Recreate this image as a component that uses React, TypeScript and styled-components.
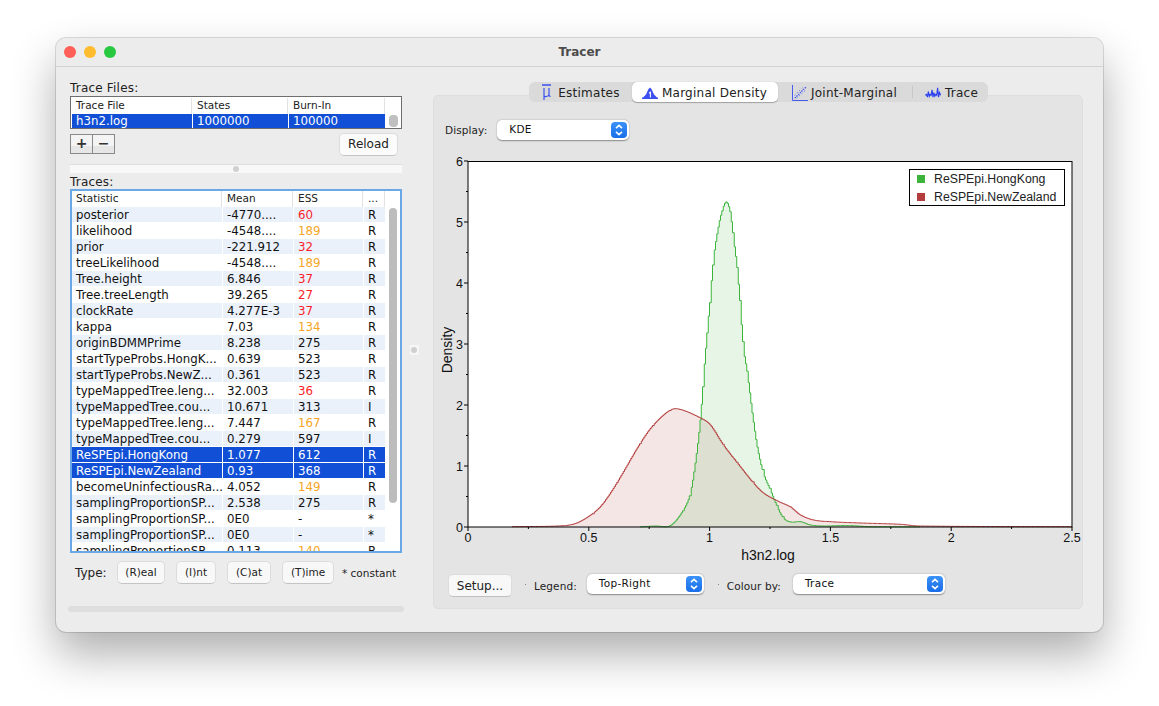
import React from "react";
import styled, { createGlobalStyle } from "styled-components";

type TraceRow = [string, string, string, string];

const TRACES: TraceRow[] = [
  ["posterior", "-4770....", "60", "R"],
  ["likelihood", "-4548....", "189", "R"],
  ["prior", "-221.912", "32", "R"],
  ["treeLikelihood", "-4548....", "189", "R"],
  ["Tree.height", "6.846", "37", "R"],
  ["Tree.treeLength", "39.265", "27", "R"],
  ["clockRate", "4.277E-3", "37", "R"],
  ["kappa", "7.03", "134", "R"],
  ["originBDMMPrime", "8.238", "275", "R"],
  ["startTypeProbs.HongK...", "0.639", "523", "R"],
  ["startTypeProbs.NewZ...", "0.361", "523", "R"],
  ["typeMappedTree.leng...", "32.003", "36", "R"],
  ["typeMappedTree.cou...", "10.671", "313", "I"],
  ["typeMappedTree.leng...", "7.447", "167", "R"],
  ["typeMappedTree.cou...", "0.279", "597", "I"],
  ["ReSPEpi.HongKong", "1.077", "612", "R"],
  ["ReSPEpi.NewZealand", "0.93", "368", "R"],
  ["becomeUninfectiousRa...", "4.052", "149", "R"],
  ["samplingProportionSP...", "2.538", "275", "R"],
  ["samplingProportionSP...", "0E0", "-", "*"],
  ["samplingProportionSP...", "0E0", "-", "*"],
  ["samplingProportionSP...", "0.113", "140", "R"],
];

// curve points are read off the picture, in page pixels
const GREEN_PTS = [
  [640, 526.8], [655, 526], [670, 525.5], [683, 510], [690, 493], [695, 463], [700, 420],
  [703, 380], [707, 330], [710, 297], [713, 260], [718, 227], [722, 210], [726, 202],
  [730, 213], [733, 237], [737, 270], [740, 307], [743, 347], [747, 373], [752, 413],
  [757, 447], [763, 473], [770, 490], [777, 507], [783, 518], [790, 522], [800, 521.7],
  [810, 525], [823, 526], [847, 525.5], [870, 526.7], [920, 527],
];

const RED_PTS = [
  [512, 526.7], [563, 525.7], [577, 522.7], [593, 513], [603, 503], [617, 482], [640, 443],
  [653, 425], [670, 410], [680, 409.5], [700, 418], [710, 425], [723, 445], [737, 463],
  [753, 483], [763, 493], [777, 501], [790, 507], [800, 515], [813, 520], [830, 521.7],
  [860, 523], [900, 524.3], [918, 526], [1072, 526.7],
];

const X_TICKS = [0, 0.25, 0.5, 0.75, 1, 1.25, 1.5, 1.75, 2, 2.25, 2.5];
const Y_TICKS = [0, 0.5, 1, 1.5, 2, 2.5, 3, 3.5, 4, 4.5, 5, 5.5, 6];
const xPos = (v: number) => 468 + v * 241.6;
const yPos = (v: number) => 527 - v * 61;

const stairs = (pts: number[][]) => {
  const slope = (i: number) => {
    const a = pts[Math.max(i - 1, 0)];
    const b = pts[Math.min(i + 1, pts.length - 1)];
    return (b[1] - a[1]) / (b[0] - a[0]);
  };
  let d = `M${pts[0][0]} ${pts[0][1]}`;
  for (let i = 0; i < pts.length - 1; i++) {
    const [x0, y0] = pts[i];
    const [x1, y1] = pts[i + 1];
    const w = x1 - x0;
    for (let x = x0 + 1.25; x <= x1; x += 1.25) {
      const t = (x - x0) / w;
      const h00 = 2 * t * t * t - 3 * t * t + 1;
      const h10 = t * t * t - 2 * t * t + t;
      const h01 = -2 * t * t * t + 3 * t * t;
      const h11 = t * t * t - t * t;
      const y = h00 * y0 + h10 * w * slope(i) + h01 * y1 + h11 * w * slope(i + 1);
      d += `H${x.toFixed(2)}V${Math.min(y, 526.8).toFixed(2)}`;
    }
  }
  return d;
};

const area = (pts: number[][]) => `${stairs(pts)}V527H${pts[0][0]}Z`;

const Stepper: React.FC = () => (
  <StepperBox>
    <svg width="10" height="14" viewBox="0 0 10 14" fill="none" stroke="#fff" strokeWidth="1.6">
      <path d="M2 5.2 5 2.4 8 5.2" />
      <path d="M2 8.8 5 11.6 8 8.8" />
    </svg>
  </StepperBox>
);

const MeanIcon: React.FC = () => (
  <svg width="14" height="17" viewBox="0 0 14 17" fill="none" stroke="#3c50f0" strokeWidth="1.2">
    <path d="M1 1H10" strokeWidth="1.4" />
    <path d="M3 4V16M3 11.5C3 13 7.6 13 8 10.5M8 4V11C8 12 8.6 12.5 9.6 12.2" />
  </svg>
);

const DensityIcon: React.FC = () => (
  <svg width="16" height="12" viewBox="0 0 16 12">
    <path d="M0 10.5H1L4 7.5 6.5 2 8 .5 9.5 2 12 7.5 15 10.5H16V12H0Z" fill="#3c50f0" />
    <path d="M7 6.2 8.4 5.2V10.5" fill="none" stroke="#fff" strokeWidth="1.1" />
  </svg>
);

const JointIcon: React.FC = () => (
  <svg width="16" height="16" viewBox="0 0 17 17" fill="none" stroke="#3c50f0" strokeWidth="1">
    <path d="M.5 0V16.5H17" />
    <path d="M3 14 15 2" strokeDasharray="1.5 1" strokeWidth="1.3" />
    <path d="M5 14 15 5M3 11 12 2" strokeDasharray="1 2.5" />
  </svg>
);

const TraceIcon: React.FC = () => (
  <svg width="16" height="12" viewBox="0 0 17 13" fill="none" stroke="#2a3ff0" strokeWidth="1.2">
    <path d="M0 9 1.5 8 2.5 11 3.5 5 4.5 10 5.5 8 6.5 9 7.5 3 8.5 11 9.5 6 10.5 10 11.5 8 12.5 9 13.5 1 14.5 11 15.5 6 17 9" />
  </svg>
);

const Chart: React.FC = () => (
  <ChartSvg viewBox="434 150 648 415">
    <rect x="468" y="161" width="604" height="366" fill="#fff" />
    <path d={area(RED_PTS)} fill="#b43c3c" fillOpacity="0.13" />
    <path d={area(GREEN_PTS)} fill="#3cb43c" fillOpacity="0.13" />
    <path d={stairs(GREEN_PTS)} fill="none" stroke="#3cb43c" strokeWidth="1" />
    <path d={stairs(RED_PTS)} fill="none" stroke="#b43c3c" strokeWidth="1" />
    <rect x="468" y="161.5" width="604" height="365.5" fill="none" stroke="#000" strokeWidth="1" />
    {Y_TICKS.map((v) => (
      <line
        key={v}
        x1={v % 1 === 0 ? 464 : 466}
        x2="468"
        y1={yPos(v)}
        y2={yPos(v)}
        stroke="#000"
        strokeWidth="1"
      />
    ))}
    {X_TICKS.map((v) => (
      <line
        key={v}
        x1={xPos(v)}
        x2={xPos(v)}
        y1="527"
        y2={v % 0.5 === 0 ? 531 : 529}
        stroke="#000"
        strokeWidth="1"
      />
    ))}
    {[0, 1, 2, 3, 4, 5, 6].map((v) => (
      <AxisText key={v} x="463" y={yPos(v) + 4.5} textAnchor="end">
        {v}
      </AxisText>
    ))}
    {[0, 0.5, 1, 1.5, 2, 2.5].map((v) => (
      <AxisText key={v} x={xPos(v)} y="542" textAnchor="middle">
        {v}
      </AxisText>
    ))}
    <AxisTitle x="768" y="560" textAnchor="middle">
      h3n2.log
    </AxisTitle>
    <AxisTitle x="0" y="0" textAnchor="middle" transform="translate(451.5 350) rotate(-90)">
      Density
    </AxisTitle>
    <rect x="909.5" y="169.5" width="155" height="36" fill="#fff" stroke="#000" strokeWidth="1" />
    <rect x="917" y="175" width="8" height="8" fill="#3cb43c" />
    <rect x="917" y="193" width="8" height="8" fill="#b43c3c" />
    <LegendText x="934" y="183">
      ReSPEpi.HongKong
    </LegendText>
    <LegendText x="934" y="201">
      ReSPEpi.NewZealand
    </LegendText>
  </ChartSvg>
);

const App: React.FC = () => (
  <>
    <GlobalStyle />
    <Window>
      <TitleBar>
        <Lights>
          <Light $color="#ff5f57" />
          <Light $color="#febc2e" />
          <Light $color="#28c840" />
        </Lights>
        <Title>Tracer</Title>
      </TitleBar>
      <Body>
        <LeftColumn>
          <SectionLabel>Trace Files:</SectionLabel>
          <FilesTable>
            <FilesRow>
              <HeadCell>Trace File</HeadCell>
              <HeadCell>States</HeadCell>
              <HeadCell>Burn-In</HeadCell>
            </FilesRow>
            <FilesRow>
              <Cell $selected>h3n2.log</Cell>
              <Cell $selected>1000000</Cell>
              <Cell $selected>100000</Cell>
              <FileThumb />
            </FilesRow>
          </FilesTable>
          <FileButtons>
            <PlusMinus>
              <PlusMinusButton>+</PlusMinusButton>
              <PlusMinusButton>−</PlusMinusButton>
            </PlusMinus>
            <ReloadButton>Reload</ReloadButton>
          </FileButtons>
          <Splitter>
            <Knob />
          </Splitter>
          <SectionLabel>Traces:</SectionLabel>
          <TracesTable>
            <TraceGrid>
              <HeadCell>Statistic</HeadCell>
              <HeadCell>Mean</HeadCell>
              <HeadCell>ESS</HeadCell>
              <HeadCell>...</HeadCell>
            </TraceGrid>
            <TraceBody>
              <TraceRows>
                {TRACES.map((row, i) => {
                  const selected = row[0].startsWith("ReSPEpi");
                  const tinted = i % 2 === 0;
                  const ess = Number(row[2]);
                  const essColor = ess < 100 ? "#fa1e28" : ess < 200 ? "#f5a623" : "#111";
                  return (
                    <TraceGrid key={i}>
                      <Cell $selected={selected} $tinted={tinted}>
                        {row[0]}
                      </Cell>
                      <Cell $selected={selected} $tinted={tinted}>
                        {row[1]}
                      </Cell>
                      <Cell $selected={selected} $tinted={tinted} $color={essColor}>
                        {row[2]}
                      </Cell>
                      <Cell $selected={selected} $tinted={tinted}>
                        {row[3]}
                      </Cell>
                    </TraceGrid>
                  );
                })}
              </TraceRows>
              <TraceScroll>
                <TraceThumb />
              </TraceScroll>
            </TraceBody>
          </TracesTable>
          <TypeRow>
            <TypeLabel>Type:</TypeLabel>
            <TypeButton $width={48}>(R)eal</TypeButton>
            <TypeButton $width={40}>(I)nt</TypeButton>
            <TypeButton $width={44}>(C)at</TypeButton>
            <TypeButton $width={52}>(T)ime</TypeButton>
            <ConstantNote>* constant</ConstantNote>
          </TypeRow>
          <BottomBar />
        </LeftColumn>
        <Gutter>
          <GutterKnob>
            <Knob />
          </GutterKnob>
        </Gutter>
        <Panel>
          <Tabs>
            <Tab $width={102} $gap={3}>
              <MeanIcon />
              Estimates
            </Tab>
            <Tab $width={146} $gap={4} $active>
              <DensityIcon />
              Marginal Density
            </Tab>
            <Tab $width={134} $gap={3}>
              <JointIcon />
              Joint-Marginal
            </Tab>
            <TabDivider />
            <Tab $width={74} $gap={4} $shift={4}>
              <TraceIcon />
              Trace
            </Tab>
          </Tabs>
          <DisplayRow>
            <ControlLabel>Display:</ControlLabel>
            <Select $width={132}>
              KDE
              <Stepper />
            </Select>
          </DisplayRow>
          <Chart />
          <SetupRow>
            <SetupButton>Setup...</SetupButton>
            <Tick />
            <ControlLabel>Legend:</ControlLabel>
            <Select $width={117}>
              Top-Right
              <Stepper />
            </Select>
            <Tick />
            <ControlLabel $gap={12}>Colour by:</ControlLabel>
            <Select $width={152}>
              Trace
              <Stepper />
            </Select>
          </SetupRow>
        </Panel>
      </Body>
    </Window>
  </>
);

const FONT = `"DejaVu Sans", Verdana, sans-serif`;

const GlobalStyle = createGlobalStyle`
  html, body {
    margin: 0;
    height: 706px;
    overflow: hidden;
    background: #fff;
    font-family: ${FONT};
    color: #1c1c1c;
  }
`;

const Window = styled.div`
  box-sizing: border-box;
  width: 1047px;
  height: 594px;
  margin: 38px 0 0 56px;
  background: #ececec;
  border-radius: 10px;
  box-shadow: 0 0 0 1px rgba(0, 0, 0, 0.13), 0 22px 45px rgba(0, 0, 0, 0.32);
  overflow: hidden;
`;

const TitleBar = styled.div`
  position: relative;
  height: 28px;
  display: flex;
  align-items: center;
  justify-content: center;
  background: #ececec;
  border-bottom: 1px solid #d2d2d2;
`;

const Lights = styled.div`
  position: absolute;
  left: 8px;
  top: 8px;
  display: flex;
  gap: 8px;
`;

const Light = styled.span<{ $color: string }>`
  width: 12px;
  height: 12px;
  border-radius: 50%;
  background: ${(p) => p.$color};
`;

const Title = styled.div`
  font-size: 12px;
  font-weight: 700;
  color: #4c4c4c;
`;

const Body = styled.div`
  display: flex;
  height: 565px;
`;

const LeftColumn = styled.div`
  width: 334px;
  margin-left: 12px;
  display: flex;
  flex-direction: column;
  padding-top: 14px;
`;

const SectionLabel = styled.div`
  margin-left: 2px;
  height: 15px;
  line-height: 15px;
  font-size: 12px;
  letter-spacing: 0.2px;
  color: #222;
`;

const FilesTable = styled.div`
  box-sizing: border-box;
  margin-left: 2px;
  width: 332px;
  height: 33px;
  border: 1px solid #6e6e6e;
  background: #fff;
  padding: 1px 0 0 1px;
`;

const HeadCell = styled.div`
  font-size: 10.5px;
  line-height: 15px;
  height: 16px;
  padding-left: 4px;
  color: #222;
  border-right: 1px solid #e2e2e2;
  white-space: nowrap;
  overflow: hidden;
`;

const Cell = styled.div<{ $selected?: boolean; $tinted?: boolean; $color?: string }>`
  font-size: 11.8px;
  line-height: 17px;
  height: 15px;
  padding-left: 4px;
  white-space: nowrap;
  overflow: hidden;
  background: ${(p) => (p.$selected ? "#1150d6" : p.$tinted ? "#ebf1fb" : "transparent")};
  color: ${(p) => (p.$selected ? "#fff" : p.$color || "#111")};
`;

const FilesRow = styled.div`
  position: relative;
  display: grid;
  grid-template-columns: 120px 95px 96px;
  column-gap: 1px;
  ${Cell} {
    height: 14px;
    line-height: 15px;
  }
`;

const FileThumb = styled.span`
  position: absolute;
  left: 317px;
  top: 1px;
  width: 9px;
  height: 12px;
  border-radius: 4px;
  background: #c0c0c0;
`;

const FileButtons = styled.div`
  margin: 4px 4px 0 2px;
  display: flex;
  justify-content: space-between;
  align-items: flex-start;
  height: 31px;
`;

const PlusMinus = styled.div`
  display: flex;
  margin-top: 1px;
  border: 1px solid #8a8a8a;
  background: linear-gradient(#f4f4f4 0, #f4f4f4 60%, #e6e6e6 60%);
`;

const PlusMinusButton = styled.div`
  width: 21px;
  height: 18px;
  line-height: 17px;
  text-align: center;
  font-size: 14px;
  font-weight: 700;
  color: #333;
  & + & {
    border-left: 1px solid #8a8a8a;
  }
`;

const ReloadButton = styled.div`
  box-sizing: border-box;
  width: 59px;
  height: 23px;
  line-height: 21px;
  text-align: center;
  font-size: 12px;
  background: #fbfbfb;
  border-radius: 5px;
  border: 1px solid #dcdcdc;
  border-bottom-color: #c4c4c4;
  color: #222;
`;

const Splitter = styled.div`
  margin: 0 0 2px 2px;
  width: 332px;
  height: 8px;
  background: #f8f8f8;
  border-top: 1px solid #dedede;
  display: flex;
  align-items: center;
  justify-content: center;
`;

const Knob = styled.span`
  width: 6px;
  height: 6px;
  border-radius: 50%;
  background: #d0d0d0;
`;

const TracesTable = styled.div`
  box-sizing: border-box;
  margin: -1px 0 0 2px;
  width: 332px;
  height: 364px;
  border: 2px solid #6aa9e6;
  background: #fff;
  overflow: hidden;
`;

const TraceGrid = styled.div`
  display: grid;
  grid-template-columns: 150px 70px 69px 21px;
  column-gap: 1px;
  height: 15px;
  margin-bottom: 1px;
`;

const TraceBody = styled.div`
  display: flex;
`;

const TraceRows = styled.div`
  width: 313px;
`;

const TraceScroll = styled.div`
  flex: 1;
  padding: 1px 0 0 4px;
`;

const TraceThumb = styled.div`
  width: 8px;
  height: 295px;
  border-radius: 4px;
  background: #bcbcbc;
`;

const TypeRow = styled.div`
  display: flex;
  align-items: center;
  margin: 8px 0 0 7px;
  height: 23px;
`;

const TypeLabel = styled.div`
  width: 42px;
  font-size: 12px;
  color: #222;
`;

const TypeButton = styled.div<{ $width: number }>`
  box-sizing: border-box;
  width: ${(p) => p.$width}px;
  height: 23px;
  line-height: 20px;
  margin-right: 11px;
  text-align: center;
  font-size: 10.5px;
  background: #f8f8f8;
  border-radius: 5px;
  border: 1px solid #dcdcdc;
  border-bottom-color: #c4c4c4;
  color: #222;
`;

const ConstantNote = styled.div`
  margin-left: -3px;
  font-size: 10.5px;
  color: #222;
  white-space: nowrap;
`;

const BottomBar = styled.div`
  width: 336px;
  height: 6px;
  margin-top: 22px;
  border-radius: 3px;
  background: #dedede;
`;

const Gutter = styled.div`
  width: 31px;
  display: flex;
  justify-content: center;
`;

const GutterKnob = styled.div`
  box-sizing: border-box;
  margin: 278px 0 0 -7px;
  width: 9px;
  height: 10px;
  background: #f6f6f6;
  display: flex;
  align-items: center;
  justify-content: center;
`;

const Panel = styled.div`
  box-sizing: border-box;
  width: 650px;
  height: 514px;
  margin-top: 28px;
  background: #e4e4e4;
  border: 1px solid #dedede;
  border-radius: 5px;
  display: flex;
  flex-direction: column;
`;

const Tabs = styled.div`
  align-self: center;
  margin-top: -14px;
  height: 20px;
  display: flex;
  align-items: center;
  padding: 0 1px;
  background: #dadada;
  border-radius: 6px;
`;

const Tab = styled.div<{ $width: number; $gap: number; $shift?: number; $active?: boolean }>`
  box-sizing: border-box;
  width: ${(p) => p.$width}px;
  height: 20px;
  padding: 1px 0 0 ${(p) => p.$shift || 0}px;
  display: flex;
  align-items: center;
  justify-content: center;
  gap: ${(p) => p.$gap}px;
  font-size: 12px;
  letter-spacing: 0.25px;
  color: #222;
  white-space: nowrap;
  border-radius: 5px;
  background: ${(p) => (p.$active ? "#fff" : "transparent")};
  box-shadow: ${(p) => (p.$active ? "0 0.5px 1px rgba(0,0,0,.3)" : "none")};
`;

const TabDivider = styled.span`
  width: 1px;
  height: 12px;
  background: #c8c8c8;
`;

const DisplayRow = styled.div`
  display: flex;
  align-items: center;
  height: 20px;
  margin: 18px 0 0 11px;
`;

const ControlLabel = styled.div<{ $gap?: number }>`
  align-self: center;
  font-size: 10.5px;
  letter-spacing: 0.1px;
  color: #222;
  margin-right: ${(p) => p.$gap || 10}px;
  white-space: nowrap;
`;

const Select = styled.div<{ $width: number }>`
  box-sizing: border-box;
  position: relative;
  width: ${(p) => p.$width}px;
  height: 20px;
  line-height: 19px;
  padding-left: 12px;
  font-size: 10.5px;
  letter-spacing: 0.3px;
  color: #111;
  background: #fff;
  border-radius: 5px;
  box-shadow: 0 0.5px 1.5px rgba(0, 0, 0, 0.4);
`;

const StepperBox = styled.span`
  position: absolute;
  right: 2px;
  top: 2px;
  width: 16px;
  height: 16px;
  border-radius: 4px;
  background: linear-gradient(#3b92f8, #1a6de8);
  display: flex;
  align-items: center;
  justify-content: center;
`;

const ChartSvg = styled.svg`
  display: block;
  width: 648px;
  height: 415px;
  margin-top: 10px;
`;

const AxisText = styled.text`
  font-family: "Liberation Sans", Arial, sans-serif;
  font-size: 12.5px;
  fill: #111;
`;

const AxisTitle = styled(AxisText)`
  font-size: 14px;
`;

const LegendText = styled.text`
  font-family: "Liberation Sans", Arial, sans-serif;
  font-size: 12.3px;
  fill: #222;
`;

const SetupRow = styled.div`
  display: flex;
  align-items: flex-start;
  margin: 9px 0 0 14px;
  height: 24px;
`;

const SetupButton = styled.div`
  box-sizing: border-box;
  width: 64px;
  height: 23px;
  margin-right: -1px;
  line-height: 22px;
  text-align: center;
  font-size: 12px;
  background: #f8f8f8;
  border-radius: 5px;
  border: 1px solid #dcdcdc;
  border-bottom-color: #bfbfbf;
  color: #222;
`;

const Tick = styled.span`
  width: 1px;
  height: 1px;
  margin: 10px 8px 0 14px;
  background: #888;
`;

export default App;
